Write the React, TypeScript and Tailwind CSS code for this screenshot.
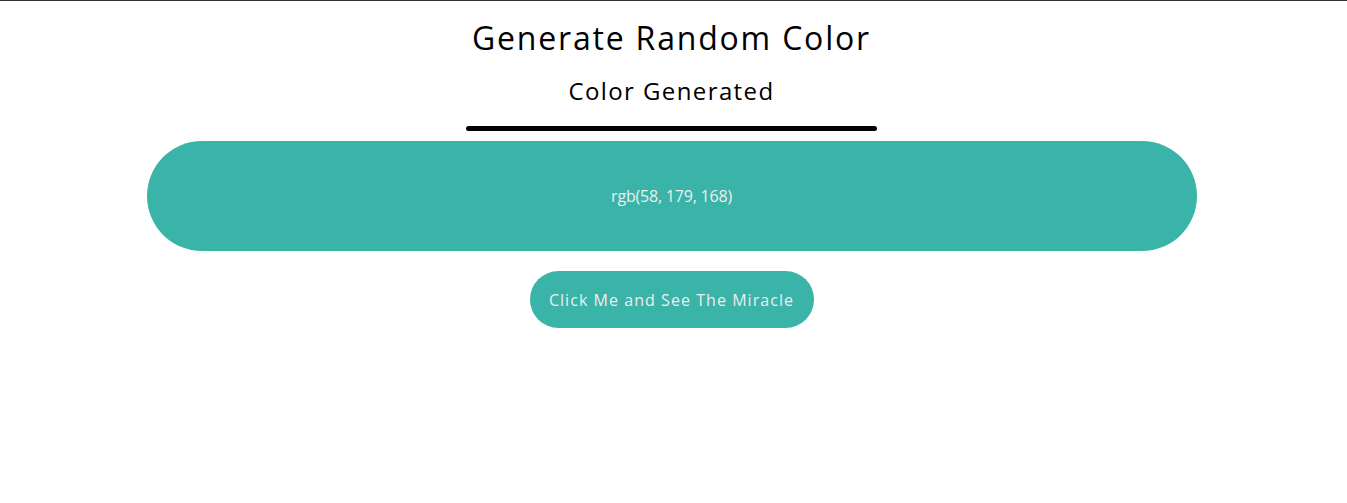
export default function App() {
  const color = 'rgb(58, 179, 168)';

  return (
    <div className="min-h-screen border-t border-[#333] bg-white font-['Open_Sans',sans-serif] text-black">
      <div className="flex flex-col items-center pr-[4px]">
        <h1 className="mt-[18px] text-[32px] leading-[38px] font-medium tracking-[1.8px]">Generate Random Color</h1>
        <h2 className="mt-[19px] text-[24px] leading-[29px] font-medium tracking-[1.4px]">Color Generated</h2>
        <div className="mt-[21px] h-[5px] w-[411px] rounded-full bg-black" />
        <div className="mt-[10px] flex h-[110px] w-[1050px] items-center justify-center rounded-full bg-[#3ab3a8] text-[16px] tracking-[-0.2px] text-[#eeeeee]">
          {color}
        </div>
        <button className="mt-[20px] h-[57px] w-[284px] rounded-full bg-[#3ab3a8] text-[16px] tracking-[1.05px] text-[#eeeeee]">
          Click Me and See The Miracle
        </button>
      </div>
    </div>
  );
}
